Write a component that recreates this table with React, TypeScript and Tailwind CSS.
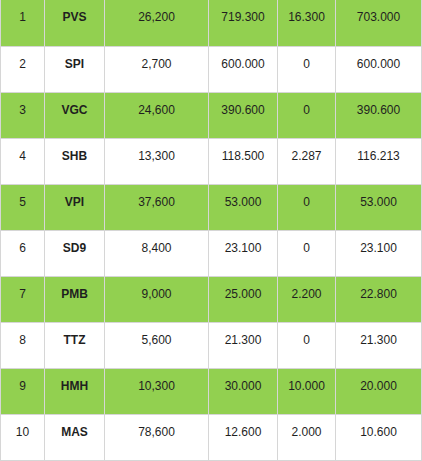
import React from "react";

const rows = [
  ["1", "PVS", "26,200", "719.300", "16.300", "703.000"],
  ["2", "SPI", "2,700", "600.000", "0", "600.000"],
  ["3", "VGC", "24,600", "390.600", "0", "390.600"],
  ["4", "SHB", "13,300", "118.500", "2.287", "116.213"],
  ["5", "VPI", "37,600", "53.000", "0", "53.000"],
  ["6", "SD9", "8,400", "23.100", "0", "23.100"],
  ["7", "PMB", "9,000", "25.000", "2.200", "22.800"],
  ["8", "TTZ", "5,600", "21.300", "0", "21.300"],
  ["9", "HMH", "10,300", "30.000", "10.000", "20.000"],
  ["10", "MAS", "78,600", "12.600", "2.000", "10.600"],
];

const widths = ["w-[44px]", "w-[60px]", "w-[104px]", "w-[69px]", "w-[58px]", "w-[86px]"];

export default function App() {
  return (
    <div className="w-[422px] h-[461px] bg-white overflow-hidden" style={{ fontFamily: '"Liberation Sans", Arial, sans-serif' }}>
      <div className="flex flex-col w-[422px] border-l border-[#d6d6d6]">
        {rows.map((r, i) => (
          <div
            key={i}
            className={`flex ${i === 0 ? "h-[47px]" : "h-[46px]"} border-b border-[#d6d6d6] ${i % 2 === 0 ? "bg-[#92d050]" : "bg-white"}`}
          >
            {r.map((c, j) => (
              <div
                key={j}
                className={`${widths[j]} shrink-0 border-r border-[#d6d6d6] text-center pt-[9px] leading-[16px] text-[12px] text-[#1f1f1f] ${j === 1 ? "font-bold text-[11.5px]" : ""}`}
              >
                {c}
              </div>
            ))}
          </div>
        ))}
      </div>
    </div>
  );
}
